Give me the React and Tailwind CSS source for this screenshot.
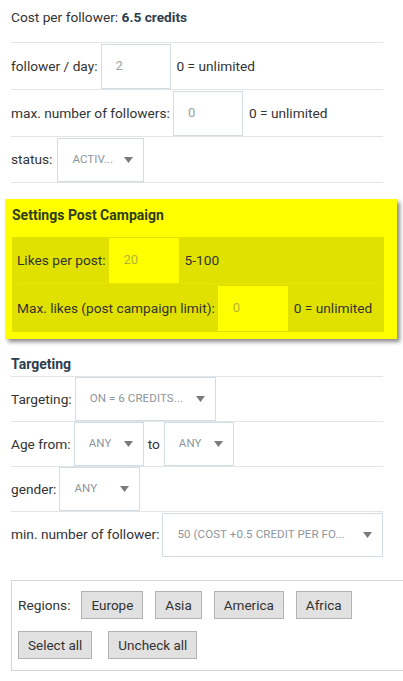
import React from 'react';

const font = { fontFamily: 'Roboto, "Liberation Sans", sans-serif' };

function Caret() {
  return (
    <svg width="9" height="6" viewBox="0 0 9 6" className="shrink-0">
      <polygon points="0,0 9,0 4.5,6" fill="#7b7b7b" />
    </svg>
  );
}

function Select({ value, className }) {
  return (
    <div
      className={`flex h-[44px] shrink-0 items-center justify-between gap-[8px] border border-[#d5dde4] bg-white pl-[14px] pr-[10px] text-[11.5px] uppercase tracking-[0.1px] text-[#8d969e] ${className}`}
    >
      <span className="overflow-hidden whitespace-nowrap">{value}</span>
      <Caret />
    </div>
  );
}

function NumInput({ value, className = 'border-[#d5dde4] bg-white text-[#9aa1a7]' }) {
  return (
    <div className={`flex h-[45px] w-[70px] shrink-0 items-center border pl-[14px] text-[13px] ${className}`}>
      {value}
    </div>
  );
}

function Row({ children, h = 'h-[47px]', last }) {
  return (
    <div className={`flex ${h} items-center gap-[3px] whitespace-nowrap ${last ? '' : 'border-b border-[#e2e5e8]'}`}>
      {children}
    </div>
  );
}

function RegionButton({ children }) {
  return (
    <button className="h-[28px] border border-[#b3b3b3] bg-[#e1e1e1] px-[9px] text-[13.5px] text-[#333]">
      {children}
    </button>
  );
}

export default function App() {
  return (
    <div className="h-[681px] w-[403px] overflow-hidden bg-white text-[13.7px] text-[#333]" style={font}>
      <div className="ml-[11px] w-[372px]">
        <div className="flex h-[43px] items-center border-b border-[#e2e5e8] pb-[7px]">
          Cost per follower:&nbsp;<b className="font-bold text-[#2c3e50]">6.5 credits</b>
        </div>
        <Row>
          <span>follower / day:</span>
          <NumInput value="2" />
          <span className="ml-[3px]">0 = unlimited</span>
        </Row>
        <Row>
          <span>max. number of followers:</span>
          <NumInput value="0" />
          <span className="ml-[3px]">0 = unlimited</span>
        </Row>
        <Row h="h-[46px]">
          <span className="mr-[2px]">status:</span>
          <Select value="ACTIV..." className="w-[87px]" />
        </Row>
      </div>

      <div className="ml-[5px] mt-[16px] w-[392px] bg-[#ffff00] pb-[7px] pl-[7px] pr-[13px] pt-[6px] shadow-[3px_3px_4px_rgba(0,0,0,0.45)]">
        <div className="mb-[12px] h-[20px] text-[14px] font-bold leading-[20px] text-[#2f3d1a]">Settings Post Campaign</div>
        <div className="bg-[#e1e100] px-[5px]">
          <div className="flex h-[47px] items-center gap-[3px] whitespace-nowrap border-b border-[#e6e600]">
            <span>Likes per post:</span>
            <NumInput value="20" className="border-transparent bg-[#ffff00] text-[#b4b43a]" />
            <span className="ml-[3px]">5-100</span>
          </div>
          <div className="flex h-[48px] items-center gap-[3px] whitespace-nowrap">
            <span>Max. likes (post campaign limit):</span>
            <NumInput value="0" className="border-transparent bg-[#ffff00] text-[#b4b43a]" />
            <span className="ml-[3px]">0 = unlimited</span>
          </div>
        </div>
      </div>

      <div className="ml-[11px] mt-[16px] w-[372px]">
        <div className="flex h-[22px] items-center border-b border-[#e2e5e8] pb-[3px] text-[14px] font-bold text-[#2c3e50]">
          Targeting
        </div>
        <Row h="h-[45px]">
          <span>Targeting:</span>
          <Select value="ON = 6 CREDITS..." className="w-[141px]" />
        </Row>
        <Row h="h-[45px]">
          <span>Age from:</span>
          <Select value="ANY" className="w-[70px]" />
          <span className="mx-[1px]">to</span>
          <Select value="ANY" className="w-[70px]" />
        </Row>
        <Row h="h-[45px]">
          <span>gender:</span>
          <Select value="ANY" className="w-[81px]" />
        </Row>
        <Row h="h-[45px]" last>
          <span>min. number of follower:</span>
          <Select value="50 (COST +0.5 CREDIT PER FO..." className="min-w-0 flex-1" />
        </Row>
      </div>

      <div className="ml-[11px] mt-[23px] w-[420px] border border-[#d0d8de] pb-[11px] pl-[6px] pt-[10px]">
        <div className="flex items-center gap-[12px]">
          <span className="mr-[-1px]">Regions:</span>
          <RegionButton>Europe</RegionButton>
          <RegionButton>Asia</RegionButton>
          <RegionButton>America</RegionButton>
          <RegionButton>Africa</RegionButton>
        </div>
        <div className="mt-[12px] flex items-center gap-[16px]">
          <RegionButton>Select all</RegionButton>
          <RegionButton>Uncheck all</RegionButton>
        </div>
      </div>
    </div>
  );
}
